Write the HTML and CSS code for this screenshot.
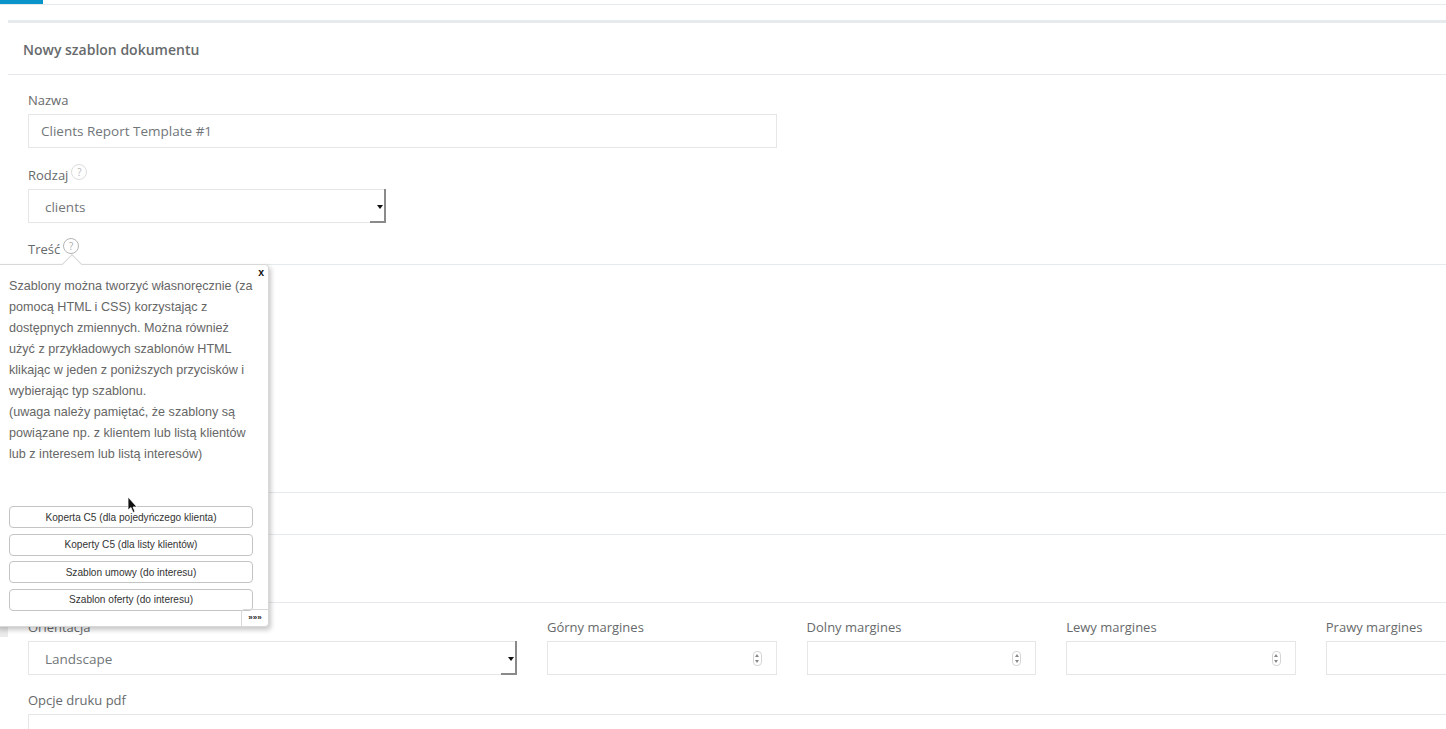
FILE: index.html
```html
<!DOCTYPE html>
<html lang="pl">
<head>
  <meta charset="UTF-8">
  <title>Nowy szablon dokumentu</title>
  <link rel="stylesheet" href="styles.css">
</head>
<body>
  <div class="tabs"><div class="tab-active"></div></div>
  <div class="card">
    <h2 class="card-title">Nowy szablon dokumentu</h2>
    <div class="form-top">
      <div class="form-group">
        <label>Nazwa</label>
        <input class="field field-name" type="text" value="Clients Report Template #1">
      </div>
      <div class="form-group">
        <label>Rodzaj <span class="help">?</span></label>
        <div class="field select select-short">clients<span class="select-arrow"></span></div>
      </div>
      <div class="form-group group-content">
        <label>Treść <span class="help help-open">?</span></label>
      </div>
    </div>
    <div class="editor-body"></div>
    <div class="editor-bar"></div>
    <div class="editor-extra"></div>
    <div class="options">
      <div class="form-group col-wide">
        <label>Orientacja</label>
        <div class="field select">Landscape<span class="select-arrow"></span></div>
      </div>
      <div class="form-group col">
        <label>Górny margines</label>
        <div class="field number"><span class="spinner"></span></div>
      </div>
      <div class="form-group col">
        <label>Dolny margines</label>
        <div class="field number"><span class="spinner"></span></div>
      </div>
      <div class="form-group col">
        <label>Lewy margines</label>
        <div class="field number"><span class="spinner"></span></div>
      </div>
      <div class="form-group col">
        <label>Prawy margines</label>
        <div class="field number"><span class="spinner"></span></div>
      </div>
    </div>
    <div class="form-group group-pdf">
      <label>Opcje druku pdf</label>
      <div class="field field-pdf"></div>
    </div>
  </div>

  <div class="popover-shade"></div>
  <div class="popover">
    <span class="popover-arrow"></span>
    <span class="popover-close">x</span>
    <p class="popover-text">Szablony można tworzyć własnoręcznie (za pomocą HTML i CSS) korzystając z dostępnych zmiennych. Można również użyć z przykładowych szablonów HTML klikając w jeden z poniższych przycisków i wybierając typ szablonu.<br>(uwaga należy pamiętać, że szablony są powiązane np. z klientem lub listą klientów lub z interesem lub listą interesów)</p>
    <div class="popover-buttons">
      <button>Koperta C5 (dla pojedyńczego klienta)</button>
      <button>Koperty C5 (dla listy klientów)</button>
      <button>Szablon umowy (do interesu)</button>
      <button>Szablon oferty (do interesu)</button>
    </div>
    <span class="popover-more">»»»</span>
  </div>

  <svg class="cursor" width="12" height="18" viewBox="0 0 12 18">
    <path d="M1 1 L1 14 L4 11.5 L6 16.5 L8 15.5 L6 11 L10 11 Z" fill="#111" stroke="#fff" stroke-width="0.8"/>
  </svg>
</body>
</html>
```

FILE: styles.css
```css
* { box-sizing: border-box; }
html, body { height: 729px; overflow: hidden; }
body {
  margin: 0;
  background: #fff;
  font-family: 'Open Sans', sans-serif;
  font-size: 13px;
  color: #676a6c;
}
.tabs {
  height: 5px;
  border-bottom: 1px solid #e7eaec;
}
.tab-active {
  width: 43px;
  height: 4px;
  background: #0b94c9;
}
.card {
  margin: 15px 0 0 8px;
  height: 709px;
  overflow: hidden;
  border-top: 3px solid #e7eaec;
}
.card-title {
  margin: 0;
  height: 52px;
  padding: 0 15px;
  line-height: 54px;
  font-size: 14px;
  font-weight: 600;
  border-bottom: 1px solid #e7eaec;
}
label {
  display: flex;
  gap: 3px;
  height: 18px;
  line-height: 18px;
  margin-bottom: 5px;
}
.form-top {
  padding: 16px 20px 0;
}
.form-group { margin-bottom: 18px; }
.field {
  display: block;
  height: 34px;
  background: #fff;
  border: 1px solid #e5e6e7;
  font-family: inherit;
  font-size: 13.5px;
  color: #71767a;
  padding: 0 12px;
  line-height: 32px;
  outline: none;
}
.field-name { width: 749px; }
.select {
  position: relative;
  padding-left: 16px;
  line-height: 34px;
}
.select-short { width: 358px; }
.select::after {
  content: "";
  position: absolute;
  right: -1px;
  bottom: -1px;
  width: 14px;
  height: 32px;
  border-right: 2px solid #8a8a8a;
  border-bottom: 2px solid #8a8a8a;
}
.select-arrow {
  position: absolute;
  right: 2px;
  top: 15px;
  border-left: 3px solid transparent;
  border-right: 3px solid transparent;
  border-top: 4px solid #111;
}
.help {
  width: 16px;
  height: 16px;
  margin-top: -2px;
  border: 1px solid #ddd;
  border-radius: 50%;
  text-align: center;
  font-size: 10px;
  line-height: 14px;
  color: #bbb;
}
.help-open {
  border-color: #b5b5b5;
  color: #aaa;
}
.group-content { margin: -1px 0 0; height: 24px; }
.editor-body {
  height: 228px;
  border-top: 1px solid #e7eaec;
}
.editor-bar {
  height: 42px;
  border-top: 1px solid #e7eaec;
}
.editor-extra {
  height: 68px;
  border-top: 1px solid #e7eaec;
}
.options {
  display: flex;
  gap: 30px;
  padding: 15px 20px 0;
  border-top: 1px solid #e7eaec;
}
.col-wide { width: 489px; flex: none; }
.col { width: 229.6px; flex: none; }
.number { position: relative; }
.spinner {
  position: absolute;
  right: 14px;
  top: 9px;
  width: 9px;
  height: 15px;
  border: 1px solid #d5d5d5;
  border-radius: 4px;
}
.spinner::before, .spinner::after {
  content: "";
  position: absolute;
  left: 1.5px;
  border-left: 2px solid transparent;
  border-right: 2px solid transparent;
}
.spinner::before { top: 2px; border-bottom: 3px solid #888; }
.spinner::after { bottom: 2px; border-top: 3px solid #888; }
.group-pdf { padding: 0 20px; margin-top: -2px; }
.field-pdf { width: 1430px; }

/* popover over the form */
.popover-shade {
  position: absolute;
  left: 0;
  top: 626px;
  width: 8px;
  height: 11px;
  background: #ebebeb;
}
.popover {
  position: absolute;
  left: -5px;
  top: 264px;
  width: 274px;
  height: 363px;
  background: #fff;
  border: 1px solid #d8d8d8;
  border-radius: 4px;
  box-shadow: 2px 3px 5px rgba(0,0,0,0.22);
  font-family: 'Liberation Sans', Arial, sans-serif;
}
.popover-arrow {
  position: absolute;
  left: 69px;
  top: -8px;
  width: 14px;
  height: 14px;
  background: #fff;
  border-left: 1px solid #d8d8d8;
  border-top: 1px solid #d8d8d8;
  transform: rotate(45deg);
}
.popover-close {
  position: absolute;
  right: 4px;
  top: 1px;
  font-size: 10.5px;
  font-weight: bold;
  color: #111;
}
.popover-text {
  position: relative;
  margin: 0;
  padding: 11px 13px 0;
  font-size: 12.6px;
  line-height: 21px;
  color: #666;
}
.popover-buttons {
  position: absolute;
  left: 13px;
  right: 15px;
  top: 241px;
  display: flex;
  flex-direction: column;
  gap: 5.5px;
}
.popover-buttons button {
  height: 22px;
  padding: 0;
  background: #fff;
  border: 1px solid #c4c4c4;
  border-radius: 4px;
  font-family: inherit;
  font-size: 10.1px;
  color: #333;
}
.popover-more {
  position: absolute;
  right: 0;
  bottom: 0;
  width: 27px;
  height: 17px;
  border-top: 1px solid #d8d8d8;
  border-left: 1px solid #d8d8d8;
  border-top-left-radius: 4px;
  text-align: center;
  font-size: 8px;
  font-weight: bold;
  line-height: 16px;
  color: #222;
}
.cursor {
  position: absolute;
  left: 127px;
  top: 496px;
}
```
